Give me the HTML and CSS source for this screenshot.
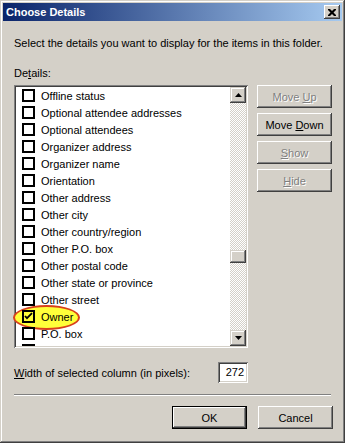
FILE: index.html
```html
<!DOCTYPE html>
<html lang="en">

<head>
    <meta charset="UTF-8">
    <meta name="viewport" content="width=device-width, initial-scale=1.0">
    <title>Choose Details</title>
    <link rel="stylesheet" href="styles.css">
</head>

<body>
    <div class="window">
        <div class="titlebar">
            <span class="title">Choose Details</span>
            <div class="close-btn">
                <svg width="8" height="7" viewBox="0 0 8 7">
                    <path d="M0 0h2l2 2 2-2h2v1l-2.5 2.5 2.5 2.5v1h-2l-2-2-2 2h-2v-1l2.5-2.5-2.5-2.5z" fill="#000" />
                </svg>
            </div>
        </div>

        <div class="content">
            <p class="intro">Select the details you want to display for the items in this folder.</p>
            <div class="details-label">De<u>t</u>ails:</div>

            <div class="main-row">
                <div class="listbox">
                    <div class="highlight"></div>
                    <ul class="items">
                        <li><span class="check"></span><span>Offline status</span></li>
                        <li><span class="check"></span><span>Optional attendee addresses</span></li>
                        <li><span class="check"></span><span>Optional attendees</span></li>
                        <li><span class="check"></span><span>Organizer address</span></li>
                        <li><span class="check"></span><span>Organizer name</span></li>
                        <li><span class="check"></span><span>Orientation</span></li>
                        <li><span class="check"></span><span>Other address</span></li>
                        <li><span class="check"></span><span>Other city</span></li>
                        <li><span class="check"></span><span>Other country/region</span></li>
                        <li><span class="check"></span><span>Other P.O. box</span></li>
                        <li><span class="check"></span><span>Other postal code</span></li>
                        <li><span class="check"></span><span>Other state or province</span></li>
                        <li><span class="check"></span><span>Other street</span></li>
                        <li>
                            <span class="check checked">
                                <svg width="9" height="9" viewBox="0 0 9 9">
                                    <path d="M1 4l2 2.2L8 1.2" fill="none" stroke="#000" stroke-width="1.8" />
                                </svg>
                            </span>
                            <span>Owner</span>
                        </li>
                        <li><span class="check"></span><span>P.O. box</span></li>
                        <li><span class="check"></span></li>
                    </ul>
                    <div class="scrollbar">
                        <div class="sb-btn">
                            <svg width="7" height="4" viewBox="0 0 7 4"><path d="M3.5 0L7 4H0z" fill="#000" /></svg>
                        </div>
                        <div class="sb-track">
                            <div class="sb-thumb"></div>
                        </div>
                        <div class="sb-btn">
                            <svg width="7" height="4" viewBox="0 0 7 4"><path d="M0 0h7L3.5 4z" fill="#000" /></svg>
                        </div>
                    </div>
                </div>

                <div class="side-buttons">
                    <div class="btn disabled"><span>Move <u>U</u>p</span></div>
                    <div class="btn"><span>Move <u>D</u>own</span></div>
                    <div class="btn disabled"><span><u>S</u>how</span></div>
                    <div class="btn disabled"><span><u>H</u>ide</span></div>
                </div>
            </div>

            <div class="width-row">
                <span><u>W</u>idth of selected column (in pixels):</span>
                <div class="num-field">272</div>
            </div>

            <div class="separator"></div>

            <div class="footer">
                <div class="btn default"><span>OK</span></div>
                <div class="btn"><span>Cancel</span></div>
            </div>
        </div>
    </div>
</body>

</html>
```

FILE: styles.css
```css
* {
    margin: 0;
    padding: 0;
    box-sizing: border-box;
}

body {
    font-family: "Liberation Sans", Arial, sans-serif;
    font-size: 11px;
    color: #000;
    background-color: #d4d0c8;
}

.window {
    width: 345px;
    height: 443px;
    padding: 3px;
    background-color: #d4d0c8;
    box-shadow: inset -1px -1px #404040, inset 1px 1px #d4d0c8, inset -2px -2px #808080, inset 2px 2px #fff;
}

.titlebar {
    height: 18px;
    display: flex;
    align-items: center;
    justify-content: space-between;
    padding: 0 2px 0 3px;
    background: linear-gradient(to right, #0a246a, #a6caf0);
}

.title {
    color: #fff;
    font-weight: bold;
    font-size: 11px;
}

.close-btn {
    width: 16px;
    height: 14px;
    display: flex;
    align-items: center;
    justify-content: center;
    background-color: #d4d0c8;
    box-shadow: inset -1px -1px #404040, inset 1px 1px #fff, inset -2px -2px #808080, inset 2px 2px #d4d0c8;
}

.content {
    padding: 15px 9px 0 11px;
}

.intro,
.details-label {
    line-height: 14px;
}

.details-label {
    margin-top: 16px;
}

.main-row {
    display: flex;
    gap: 9px;
    margin-top: 5px;
}

/* list with checkboxes */
.listbox {
    position: relative;
    width: 234px;
    height: 263px;
    padding: 2px;
    display: flex;
    background-color: #fff;
    box-shadow: inset 1px 1px #808080, inset -1px -1px #fff, inset 2px 2px #404040, inset -2px -2px #d4d0c8;
}

.highlight {
    position: absolute;
    left: -1px;
    top: 220px;
    width: 67px;
    height: 25px;
    border: 2px solid #d8401c;
    border-radius: 50%;
    background-color: #ffff3a;
    z-index: 0;
}

.items {
    position: relative;
    z-index: 1;
    flex: 1;
    list-style: none;
    overflow: hidden;
}

.items li {
    height: 17px;
    display: flex;
    align-items: center;
    gap: 6px;
    padding-left: 6px;
    white-space: nowrap;
}

.check {
    width: 13px;
    height: 13px;
    flex-shrink: 0;
    border: 2px solid #000;
    background-color: #fff;
    display: flex;
    align-items: center;
    justify-content: center;
}

.check.checked {
    background-color: transparent;
}

.scrollbar {
    position: relative;
    z-index: 1;
    width: 16px;
    display: flex;
    flex-direction: column;
}

.sb-btn {
    height: 16px;
    display: flex;
    align-items: center;
    justify-content: center;
    background-color: #d4d0c8;
    box-shadow: inset -1px -1px #404040, inset 1px 1px #d4d0c8, inset -2px -2px #808080, inset 2px 2px #fff;
}

.sb-track {
    flex: 1;
    padding-top: 147px;
    background: repeating-conic-gradient(#fff 0 25%, #d4d0c8 0 50%) 0 0 / 2px 2px;
}

.sb-thumb {
    height: 13px;
    background-color: #d4d0c8;
    box-shadow: inset -1px -1px #404040, inset 1px 1px #d4d0c8, inset -2px -2px #808080, inset 2px 2px #fff;
}

/* buttons */
.side-buttons {
    display: flex;
    flex-direction: column;
    gap: 5px;
}

.btn {
    width: 75px;
    height: 23px;
    display: flex;
    align-items: center;
    justify-content: center;
    background-color: #d4d0c8;
    box-shadow: inset -1px -1px #404040, inset 1px 1px #fff, inset -2px -2px #808080, inset 2px 2px #d4d0c8;
}

.btn.disabled {
    color: #808080;
    text-shadow: 1px 1px #fff;
}

.btn.default {
    box-shadow: inset 0 0 0 1px #000, inset -2px -2px #404040, inset 2px 2px #fff, inset -3px -3px #808080;
}

.width-row {
    display: flex;
    align-items: center;
    justify-content: space-between;
    width: 234px;
    margin-top: 14px;
}

.num-field {
    width: 30px;
    height: 21px;
    padding: 0 4px;
    line-height: 21px;
    text-align: right;
    background-color: #fff;
    box-shadow: inset 1px 1px #808080, inset -1px -1px #fff, inset 2px 2px #404040, inset -2px -2px #d4d0c8;
}

.separator {
    height: 2px;
    margin: 11px 2px 0 0;
    border-top: 1px solid #808080;
    border-bottom: 1px solid #fff;
}

.footer {
    display: flex;
    justify-content: flex-end;
    gap: 11px;
    margin-top: 10px;
}
```
